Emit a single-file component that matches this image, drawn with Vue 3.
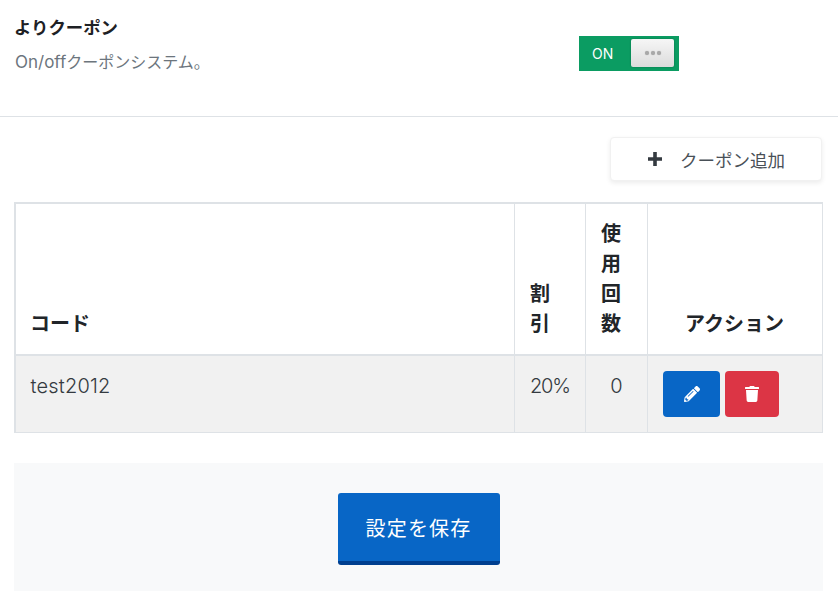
<script setup>
const rows = [{ code: 'test2012', discount: '20%', used: '0' }]
</script>

<template>
  <div class="page">
    <section class="setting">
      <div class="setting-text">
        <h3 class="title">よりクーポン</h3>
        <p class="desc"><span class="latin">On/off</span>クーポンシステム。</p>
      </div>
      <div class="toggle-cell">
        <div class="toggle">
          <span class="on">ON</span>
          <span class="knob"><i></i><i></i><i></i></span>
        </div>
      </div>
    </section>
    <div class="toolbar">
      <button class="add">
        <svg class="plus" width="16" height="16" viewBox="0 0 16 16"><path d="M6.2 1h3.600v5.200H15v3.600H9.800V15H6.200V9.800H1V6.200h5.200z" fill="#343a40"/></svg>
        <span>クーポン追加</span>
      </button>
    </div>
    <table class="grid">
      <thead>
        <tr>
          <th class="c-code">コード</th>
          <th class="c-disc">割引</th>
          <th class="c-used">使用回数</th>
          <th class="c-act">アクション</th>
        </tr>
      </thead>
      <tbody>
        <tr v-for="r in rows" :key="r.code">
          <td class="code">{{ r.code }}</td>
          <td class="disc">{{ r.discount }}</td>
          <td class="center">{{ r.used }}</td>
          <td class="actions">
            <div class="btns">
              <button class="icon blue">
                <svg width="16" height="16" viewBox="0 0 512 512"><path fill="#fff" d="M497.900 142.100l-46.100 46.100c-4.700 4.700-12.300 4.700-17 0l-111-111c-4.700-4.700-4.700-12.300 0-17l46.100-46.100c18.700-18.700 49.100-18.700 67.900 0l60.100 60.100c18.800 18.700 18.800 49.100 0 67.900zM284.200 99.800L21.600 362.400.4 483.900c-2.900 16.400 11.400 30.600 27.800 27.800l121.500-21.300 262.600-262.600c4.700-4.700 4.700-12.300 0-17l-111-111c-4.800-4.700-12.400-4.700-17.100 0zM124.100 339.900c-5.500-5.500-5.500-14.300 0-19.800l154-154c5.500-5.500 14.300-5.500 19.800 0s5.500 14.300 0 19.800l-154 154c-5.500 5.500-14.300 5.500-19.800 0zM88 424h48v36.300l-64.500 11.300-31.100-31.100L51.700 376H88v48z"/></svg>
              </button>
              <button class="icon red">
                <svg width="14" height="16" viewBox="0 0 448 512"><path fill="#fff" d="M432 32H312l-9.400-18.700A24 24 0 0 0 281.100 0H166.800a23.700 23.700 0 0 0-21.400 13.300L136 32H16A16 16 0 0 0 0 48v32a16 16 0 0 0 16 16h416a16 16 0 0 0 16-16V48a16 16 0 0 0-16-16zM53.200 467a48 48 0 0 0 47.900 45h245.800a48 48 0 0 0 47.900-45L416 128H32z"/></svg>
              </button>
            </div>
          </td>
        </tr>
      </tbody>
    </table>
    <div class="footer">
      <button class="save">設定を保存</button>
    </div>
  </div>
</template>

<style>
html, body { margin: 0; background: #fff; }
</style>

<style scoped>
.page {
  width: 838px;
  height: 607px;
  overflow: hidden;
  background: #fff;
  font-family: "Inter", "Noto Sans CJK JP", sans-serif;
  color: #212529;
  box-sizing: border-box;
}
.setting {
  display: flex;
  height: 116px;
  border-bottom: 1px solid #dee2e6;
  box-sizing: content-box;
}
.setting-text { width: 579px; padding: 16px 0 0 14px; box-sizing: border-box; }
.title { margin: 0; font-size: 17.4px; line-height: 24px; font-weight: 700; color: #1e2125; }
.desc { margin: 10px 0 0 1px; font-size: 16px; line-height: 24px; color: #6c757d; }
.latin { font-size: 17px; }
.toggle-cell { padding-top: 36px; }
.toggle {
  width: 100px;
  height: 35px;
  background: #0b9c62;
  display: flex;
  align-items: center;
  position: relative;
  color: #fff;
  font-size: 14px;
}
.on { margin-left: 13px; }
.knob {
  position: absolute;
  left: 52px;
  top: 3px;
  width: 43px;
  height: 28px;
  border-radius: 2px;
  background: linear-gradient(#f6f6f6, #dcdcdc);
  box-shadow: 0 0 2px rgba(0,0,0,.3);
  display: flex;
  align-items: center;
  justify-content: center;
  gap: 2px;
}
.knob i { width: 4px; height: 4px; border-radius: 50%; background: #a8a8a8; box-shadow: 0 0 1px #a8a8a8; }
.toolbar { display: flex; justify-content: flex-end; padding: 20px 16px 21px 0; }
.add {
  width: 212px;
  height: 44px;
  background: #fff;
  border: 1px solid #f1f1f1;
  border-radius: 4px;
  box-shadow: 0 2px 5px rgba(0,0,0,.08);
  display: flex;
  align-items: center;
  justify-content: center;
  gap: 17px;
  font: inherit;
  font-size: 17.5px;
  color: #495057;
  padding: 0;
}
.grid {
  margin-left: 14px;
  width: 809px;
  border-collapse: separate;
  border-spacing: 0;
  table-layout: fixed;
  border-top: 2px solid #dee2e6;
  border-left: 2px solid #dee2e6;
  box-sizing: border-box;
}
.grid th, .grid td {
  box-sizing: border-box;
  border-right: 1px solid #dee2e6;
  border-bottom: 1px solid #dee2e6;
  padding: 15px 15px 15px 14px;
}
.grid th {
  font-size: 20px;
  line-height: 30px;
  font-weight: 700;
  text-align: left;
  vertical-align: bottom;
  border-bottom-width: 2px;
  color: #212529;
}
.grid th.c-act { text-align: center; }
.c-code { width: 499px; }
.c-disc { width: 71px; padding-right: 17px !important; padding-left: 15px !important; }
.c-used { width: 62px; padding-left: 15px !important; }
.grid tbody tr { background: #f1f1f1; }
.grid td { vertical-align: top; font-size: 20px; font-weight: 300; line-height: 30px; color: #343a40; padding-left: 15px; }
.grid td.code { padding-left: 14.500px; letter-spacing: .2px; }
.grid td.disc { letter-spacing: -1.2px; }
.grid td.center { text-align: center; }
.btns { display: flex; gap: 5px; }
.icon {
  flex: none;
  height: 46px;
  border: 0;
  border-radius: 4px;
  display: flex;
  align-items: center;
  justify-content: center;
  padding: 0;
}
.blue { width: 57px; background: #0866c6; }
.red { width: 54px; background: #dc3545; }
.footer {
  margin: 30px 15px 0 14px;
  height: 128px;
  background: #f8f9fa;
  display: flex;
  justify-content: center;
  padding-top: 30px;
  box-sizing: border-box;
}
.save {
  width: 162px;
  height: 72px;
  background: #0866c6;
  border: 0;
  border-bottom: 4px solid #003f8f;
  border-radius: 3px;
  color: #fff;
  font: inherit;
  font-size: 20px;
  letter-spacing: 1.2px;
}
</style>
